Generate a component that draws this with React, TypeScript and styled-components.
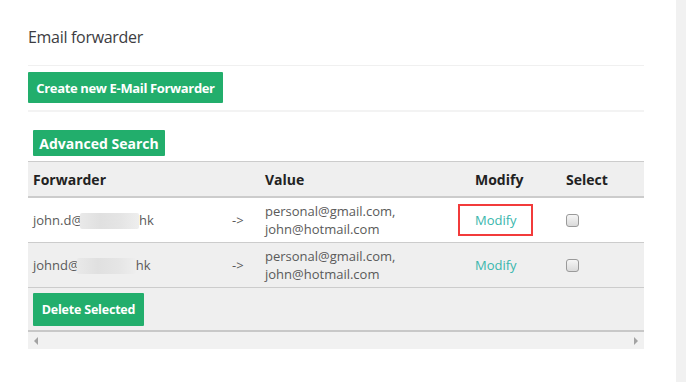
import React from "react";
import styled, { createGlobalStyle } from "styled-components";

const GlobalStyle = createGlobalStyle`
    html, body {
        margin: 0;
        padding: 0;
        background: #ffffff;
        font-family: "Open Sans", "Liberation Sans", sans-serif;
    }
`;

const GREEN = "#22ae6c";
const BORDER = "#cccccc";
const STRIPE = "#efefef";

const Page = styled.div`
    display: flex;
    width: 686px;
    height: 382px;
    overflow: hidden;
`;

const Main = styled.div`
    flex: 1;
    padding: 0 32px 0 28px;
`;

const Track = styled.div`
    width: 10px;
    background: #f1f1f1;
`;

const Title = styled.h2`
    margin: 0 0 17px;
    padding-top: 26px;
    font-size: 16px;
    line-height: 22px;
    font-weight: 400;
    letter-spacing: -0.3px;
    color: #3d3d42;
`;

const Divider = styled.div<{ $thick?: boolean }>`
    height: ${(p) => (p.$thick ? 2 : 1)}px;
    background: ${(p) => (p.$thick ? "#f3f3f3" : "#f0f0f0")};
`;

const ButtonBar = styled.div`
    padding: 6px 0 7px;
`;

const Button = styled.button<{ $h: number; $w: number; $size: number; $track?: number }>`
    display: inline-flex;
    align-items: center;
    justify-content: center;
    width: ${(p) => p.$w}px;
    height: ${(p) => p.$h}px;
    padding: 0;
    border: none;
    border-radius: 1px;
    background: ${GREEN};
    color: #ffffff;
    font-family: "Open Sans", "Liberation Sans", sans-serif;
    font-weight: 700;
    font-size: ${(p) => p.$size}px;
    letter-spacing: ${(p) => p.$track ?? 0}px;
    white-space: nowrap;
    cursor: pointer;
`;

const SearchBar = styled.div`
    margin-top: 18px;
    padding-left: 5px;
    margin-bottom: 5px;
    line-height: 0;
`;

const Table = styled.div`
    width: 616px;
    border-top: 1px solid ${BORDER};
`;

const Row = styled.div<{ $striped?: boolean; $head?: boolean }>`
    display: grid;
    grid-template-columns: 199px 33px 210px 91px 1fr;
    height: ${(p) => (p.$head ? 34 : 44)}px;
    background: ${(p) => (p.$striped || p.$head ? STRIPE : "#ffffff")};
    border-bottom: ${(p) => (p.$head ? 2 : 1)}px solid ${BORDER};
`;

const HeadCell = styled.div`
    display: flex;
    align-items: center;
    padding: 0 5px;
    font-size: 14px;
    font-weight: 700;
    color: #222222;
`;

const Cell = styled.div`
    display: flex;
    align-items: center;
    padding: 0 5px;
    font-size: 13px;
    line-height: 18px;
    color: #5a5a5a;
`;

const Masked = styled.span<{ $w: number }>`
    display: inline-block;
    width: ${(p) => p.$w}px;
    height: 16px;
    margin-left: -3px;
    vertical-align: middle;
    background: linear-gradient(90deg, #e9e9e9, #e0e0e0 35%, #e5e5e5 70%, #eeeeee);
    border-radius: 2px;
`;

const ModifyLink = styled.a<{ $marked?: boolean }>`
    position: relative;
    color: #39b6ad;
    text-decoration: none;
    cursor: pointer;

    &::before {
        content: "";
        display: ${(p) => (p.$marked ? "block" : "none")};
        position: absolute;
        top: -7px;
        bottom: -7px;
        left: -17px;
        right: -16px;
        border: 2px solid #f23b3b;
    }
`;

const Check = styled.span`
    display: inline-block;
    width: 11px;
    height: 11px;
    border: 1px solid #9a9a9a;
    border-radius: 3px;
    background: linear-gradient(#f6f6f6, #dadada);
`;

const Footer = styled.div`
    height: 37px;
    padding: 5px 5px 0;
    background: ${STRIPE};
    border-bottom: 2px solid #c8c8c8;
`;

const ScrollBar = styled.div`
    display: flex;
    align-items: center;
    justify-content: space-between;
    height: 17px;
    padding: 0 6px 0 6px;
    background: #f1f1f1;
`;

const Arrow = styled.span<{ $dir: "left" | "right" }>`
    width: 0;
    height: 0;
    border-top: 4px solid transparent;
    border-bottom: 4px solid transparent;
    ${(p) => (p.$dir === "left" ? "border-right: 4px solid #a3a3a3;" : "border-left: 4px solid #a3a3a3;")}
`;

interface Forwarder {
    prefix: string;
    mask: number;
    marked?: boolean;
}

const forwarders: Forwarder[] = [
    { prefix: "john.d@", mask: 59, marked: true },
    { prefix: "johnd@", mask: 59 },
];

export default function App() {
    return (
        <>
            <GlobalStyle />
            <Page>
                <Main>
                    <Title>Email forwarder</Title>
                    <Divider />
                    <ButtonBar>
                        <Button $w={195} $h={31} $size={13} $track={-0.35}>
                            Create new E-Mail Forwarder
                        </Button>
                    </ButtonBar>
                    <Divider $thick />
                    <SearchBar>
                        <Button $w={132} $h={26} $size={14}>
                            Advanced Search
                        </Button>
                    </SearchBar>
                    <Table>
                        <Row $head>
                            <HeadCell>Forwarder</HeadCell>
                            <HeadCell />
                            <HeadCell>Value</HeadCell>
                            <HeadCell>Modify</HeadCell>
                            <HeadCell>Select</HeadCell>
                        </Row>
                        {forwarders.map((f, i) => (
                            <Row key={f.prefix} $striped={i % 2 === 1}>
                                <Cell>
                                    <span>
                                        {f.prefix}
                                        <Masked $w={f.mask} />
                                        hk
                                    </span>
                                </Cell>
                                <Cell>-&gt;</Cell>
                                <Cell>
                                    <span>
                                        personal@gmail.com,
                                        <br />
                                        john@hotmail.com
                                    </span>
                                </Cell>
                                <Cell>
                                    <ModifyLink $marked={f.marked}>Modify</ModifyLink>
                                </Cell>
                                <Cell>
                                    <Check />
                                </Cell>
                            </Row>
                        ))}
                        <Footer>
                            <Button $w={111} $h={33} $size={12.5} $track={-0.2}>
                                Delete Selected
                            </Button>
                        </Footer>
                        <ScrollBar>
                            <Arrow $dir="left" />
                            <Arrow $dir="right" />
                        </ScrollBar>
                    </Table>
                </Main>
                <Track />
            </Page>
        </>
    );
}
